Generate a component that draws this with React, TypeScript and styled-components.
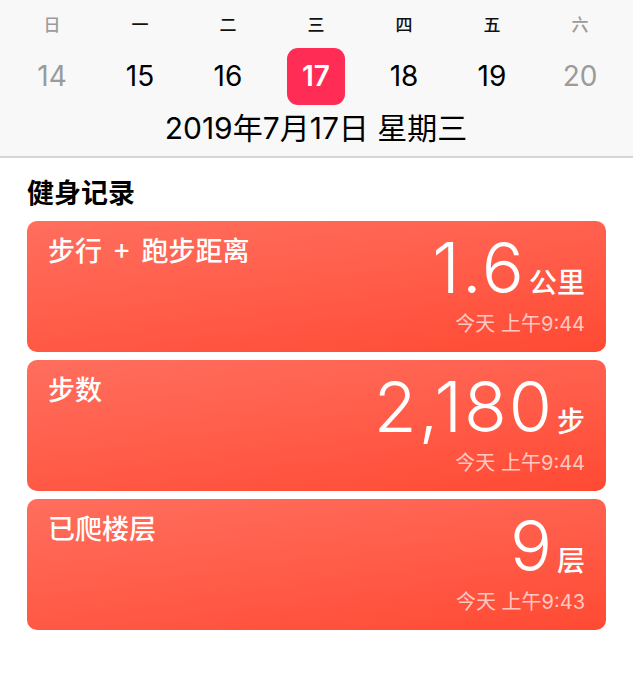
import React from "react";
import styled, { createGlobalStyle } from "styled-components";

const Global = createGlobalStyle`
  html, body { margin: 0; padding: 0; background: #ffffff; }
  body { font-family: "Noto Sans CJK SC", "Noto Sans", sans-serif; -webkit-font-smoothing: antialiased; }
`;

const Page = styled.div`
  width: 633px;
  height: 674px;
  background: #ffffff;
  overflow: hidden;
`;

const Header = styled.div`
  background: #f8f8f8;
  border-bottom: 2px solid #d6d6d6;
  height: 158px;
  box-sizing: border-box;
  padding: 0 9px 0 8px;
  display: flex;
  flex-direction: column;
`;

const WeekRow = styled.div`
  display: grid;
  grid-template-columns: repeat(7, 88px);
  height: 46px;
  align-items: center;
`;

const WeekLabel = styled.div<{ $weekend?: boolean }>`
  text-align: center;
  font-family: "Noto Sans CJK SC", sans-serif;
  font-size: 17px;
  font-weight: 500;
  color: ${(p) => (p.$weekend ? "#9b9b9b" : "#111111")};
`;

const DayRow = styled.div`
  display: grid;
  grid-template-columns: repeat(7, 88px);
  height: 60px;
  align-items: center;
  justify-items: center;
`;

const Day = styled.div<{ $muted?: boolean; $selected?: boolean }>`
  width: 58px;
  height: 57px;
  border-radius: 11px;
  display: flex;
  align-items: center;
  justify-content: center;
  font-family: "Inter", "Roboto", sans-serif;
  font-size: 28px;
  font-weight: ${(p) => (p.$selected ? 600 : 400)};
  background: ${(p) => (p.$selected ? "#ff2d55" : "transparent")};
  color: ${(p) => (p.$selected ? "#ffffff" : p.$muted ? "#9b9b9b" : "#000000")};
`;

const DateLine = styled.div`
  text-align: center;
  font-family: "Inter", "Noto Sans CJK SC", sans-serif;
  font-size: 30px;
  color: #000;
  line-height: 44px;
`;

const Section = styled.div`
  padding: 14px 27px 0 27px;
  display: flex;
  flex-direction: column;
  gap: 8px;
`;

const SectionTitle = styled.div`
  font-family: "Noto Sans CJK SC", sans-serif;
  font-weight: 700;
  font-size: 27px;
  color: #000;
  line-height: 40px;
  margin-bottom: 1px;
`;

const Card = styled.div`
  height: 131px;
  border-radius: 10px;
  background: linear-gradient(172deg, #ff6e5d 0%, #ff5d4a 50%, #ff4a33 100%);
  display: flex;
  justify-content: space-between;
  padding: 8px 21px 0 21px;
  box-sizing: border-box;
  color: #fff;
`;

const CardTitle = styled.div`
  font-family: "Noto Sans CJK SC", sans-serif;
  font-size: 27px;
  font-weight: 500;
  line-height: 42px;
  white-space: pre;
  word-spacing: 6px;
`;

const Right = styled.div`
  display: flex;
  flex-direction: column;
  align-items: flex-end;
`;

const ValueRow = styled.div`
  display: flex;
  align-items: baseline;
  gap: 3px;
  height: 76px;
`;

const Value = styled.span`
  font-family: "Inter", "Roboto", sans-serif;
  font-weight: 300;
  font-size: 70px;
  line-height: 78px;
  letter-spacing: 2px;
`;

const Unit = styled.span`
  font-family: "Noto Sans CJK SC", sans-serif;
  font-weight: 500;
  font-size: 28px;
`;

const Time = styled.div`
  font-family: "Inter", "Noto Sans CJK SC", sans-serif;
  font-size: 20px;
  color: rgba(255, 255, 255, 0.7);
  line-height: 30px;
  margin-top: 4px;
`;

const weeks = ["日", "一", "二", "三", "四", "五", "六"];
const days = [14, 15, 16, 17, 18, 19, 20];

const records = [
  { title: "步行 + 跑步距离", value: "1.6", unit: "公里", time: "今天 上午9:44" },
  { title: "步数", value: "2,180", unit: "步", time: "今天 上午9:44" },
  { title: "已爬楼层", value: "9", unit: "层", time: "今天 上午9:43" },
];

export default function App() {
  return (
    <Page>
      <Global />
      <Header>
        <WeekRow>
          {weeks.map((w, i) => (
            <WeekLabel key={w} $weekend={i === 0 || i === 6}>{w}</WeekLabel>
          ))}
        </WeekRow>
        <DayRow>
          {days.map((d, i) => (
            <Day key={d} $muted={i === 0 || i === 6} $selected={d === 17}>{d}</Day>
          ))}
        </DayRow>
        <DateLine>2019年7月17日 星期三</DateLine>
      </Header>
      <Section>
        <SectionTitle>健身记录</SectionTitle>
        {records.map((r) => (
          <Card key={r.title}>
            <CardTitle>{r.title}</CardTitle>
            <Right>
              <ValueRow>
                <Value>{r.value}</Value>
                <Unit>{r.unit}</Unit>
              </ValueRow>
              <Time>{r.time}</Time>
            </Right>
          </Card>
        ))}
      </Section>
    </Page>
  );
}
